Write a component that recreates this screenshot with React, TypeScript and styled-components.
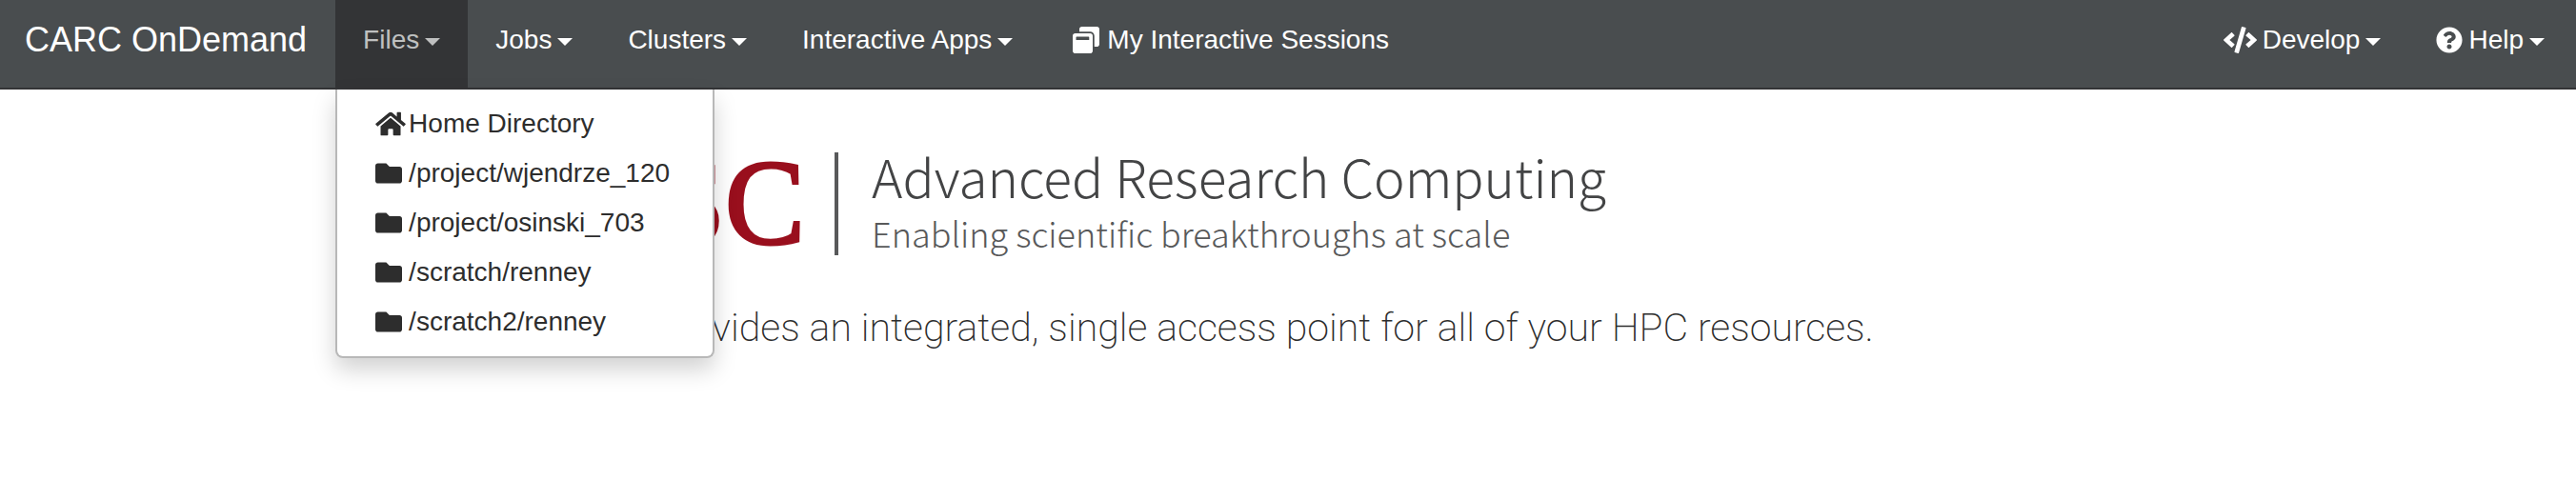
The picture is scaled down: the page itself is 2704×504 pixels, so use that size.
import React from 'react';
import styled, { createGlobalStyle } from 'styled-components';
import { FaCode, FaFolder, FaHome, FaQuestionCircle, FaWindowRestore } from 'react-icons/fa';

const GlobalStyle = createGlobalStyle`
  * { box-sizing: border-box; }
  body {
    margin: 0;
    background: #fff;
    color: #2d2d2d;
    font-family: "Liberation Sans", Arial, sans-serif;
    font-size: 28px;
    line-height: 40px;
  }
`;

const Page = styled.div`
  min-height: 100vh;
`;

const Navbar = styled.nav`
  display: flex;
  align-items: stretch;
  padding: 0 4px 0 26px;
  background: #494d4f;
  border-bottom: 2px solid #333436;
  color: #fff;
  white-space: nowrap;
`;

const Brand = styled.a`
  padding: 22px 30px 30px 0;
  color: inherit;
  font-size: 36px;
  text-decoration: none;
`;

const NavList = styled.ul<{ $end?: boolean }>`
  display: flex;
  margin: 0;
  margin-left: ${p => (p.$end ? 'auto' : '0')};
  padding: 0;
  list-style: none;
`;

const NavItem = styled.li`
  display: flex;
  position: relative;
`;

const NavButton = styled.button<{ $open?: boolean }>`
  display: flex;
  align-items: center;
  gap: 6px;
  padding: 22px 29px 30px;
  border: 0;
  background: ${p => (p.$open ? '#333436' : 'transparent')};
  color: ${p => (p.$open ? '#bfc0c0' : '#fff')};
  font: inherit;
  cursor: pointer;
`;

const NavLink = styled.a`
  display: flex;
  align-items: center;
  gap: 8px;
  padding: 22px 34px 30px;
  color: inherit;
  text-decoration: none;
`;

const Caret = styled.span`
  margin-top: 4px;
  border-top: 8px solid currentColor;
  border-left: 8px solid transparent;
  border-right: 8px solid transparent;
`;

const Glyph = styled.span<{ $box?: number; $width?: number }>`
  display: flex;
  flex: none;
  width: ${p => p.$box ?? 28}px;
  svg {
    flex: none;
    width: ${p => p.$width ?? 28}px;
    height: 28px;
  }
`;

const Menu = styled.ul`
  position: absolute;
  top: 100%;
  left: 0;
  z-index: 1;
  min-width: 398px;
  margin: 2px 0 0;
  padding: 10px 0;
  border: 2px solid #b8b8b8;
  border-top: 0;
  border-radius: 0 0 8px 8px;
  background: #fff;
  box-shadow: 0 12px 24px rgba(0, 0, 0, 0.18);
  list-style: none;
`;

const MenuLink = styled.a`
  display: flex;
  align-items: center;
  gap: 7px;
  padding: 6px 40px;
  color: #2d2d2d;
  text-decoration: none;
`;

const Main = styled.main`
  padding: 66px 0 0 478px;
`;

const Logo = styled.div`
  display: flex;
  align-items: stretch;
  padding-left: 122px;
`;

const Monogram = styled.span`
  color: #990f1d;
  font-family: "Liberation Serif", serif;
  font-size: 126px;
  line-height: 108px;
  -webkit-text-stroke: 3px #990f1d;
`;

const Divider = styled.span`
  width: 4px;
  margin: 0 35px 0 31px;
  background: #58595a;
`;

const Wordmark = styled.div`
  font-family: "Noto Sans CJK SC", "Open Sans", sans-serif;
  font-weight: 300;
  white-space: nowrap;
`;

const Title = styled.div`
  margin-bottom: 12px;
  color: #434445;
  font-size: 55px;
  line-height: 48px;
`;

const Tagline = styled.div`
  color: #58595a;
  font-size: 36px;
  line-height: 48px;
`;

const Lead = styled.p`
  margin: 48px 0 0;
  font-family: Roboto, "Liberation Sans", sans-serif;
  font-size: 41px;
  font-weight: 200;
  line-height: 56px;
  white-space: nowrap;
`;

const folders = [
  '/project/wjendrze_120',
  '/project/osinski_703',
  '/scratch/renney',
  '/scratch2/renney',
];

export default function App() {
  return (
    <Page>
      <GlobalStyle />
      <Navbar>
        <Brand href="#">CARC OnDemand</Brand>
        <NavList>
          <NavItem>
            <NavButton $open aria-expanded="true">Files<Caret /></NavButton>
            <Menu>
              <li>
                <MenuLink href="#home"><Glyph $width={32}><FaHome /></Glyph>Home Directory</MenuLink>
              </li>
              {folders.map(path => (
                <li key={path}>
                  <MenuLink href={`#${path}`}><Glyph><FaFolder /></Glyph>{path}</MenuLink>
                </li>
              ))}
            </Menu>
          </NavItem>
          <NavItem><NavButton>Jobs<Caret /></NavButton></NavItem>
          <NavItem><NavButton>Clusters<Caret /></NavButton></NavItem>
          <NavItem><NavButton>Interactive Apps<Caret /></NavButton></NavItem>
          <NavItem>
            <NavLink href="#sessions"><Glyph><FaWindowRestore /></Glyph>My Interactive Sessions</NavLink>
          </NavItem>
        </NavList>
        <NavList $end>
          <NavItem><NavButton><Glyph $box={35} $width={35}><FaCode /></Glyph>Develop<Caret /></NavButton></NavItem>
          <NavItem><NavButton><Glyph><FaQuestionCircle /></Glyph>Help<Caret /></NavButton></NavItem>
        </NavList>
      </Navbar>
      <Main>
        <Logo>
          <Monogram>USC</Monogram>
          <Divider />
          <Wordmark>
            <Title>Advanced Research Computing</Title>
            <Tagline>Enabling scientific breakthroughs at scale</Tagline>
          </Wordmark>
        </Logo>
        <Lead>OnDemand provides an integrated, single access point for all of your HPC resources.</Lead>
      </Main>
    </Page>
  );
}
